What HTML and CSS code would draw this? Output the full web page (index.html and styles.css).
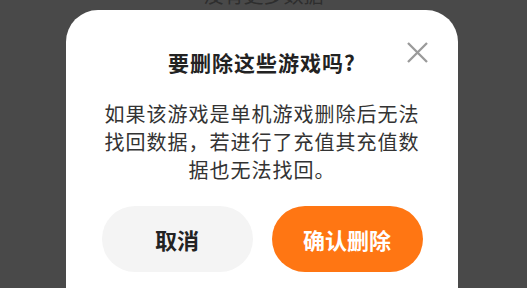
FILE: index.html
```html
<!DOCTYPE html>
<html lang="zh-CN">
<head>
<meta charset="utf-8">
<title>删除游戏</title>
<link rel="stylesheet" href="styles.css">
</head>
<body>
<div class="page">
  <div class="list-end">没有更多数据</div>
</div>
<div class="overlay">
  <div class="dialog">
    <button class="close" aria-label="关闭">
      <svg width="21" height="21" viewBox="0 0 21 21"><path d="M1 1 L20 20 M20 1 L1 20" stroke="#9a9a9a" stroke-width="2.3" fill="none"/></svg>
    </button>
    <h2 class="title">要删除这些游戏吗?</h2>
    <p class="message">如果该游戏是单机游戏删除后无法找回数据，若进行了充值其充值数据也无法找回。</p>
    <div class="actions">
      <button class="btn btn-cancel">取消</button>
      <button class="btn btn-confirm">确认删除</button>
    </div>
  </div>
</div>
</body>
</html>
```
FILE: styles.css
```css
html, body {
  margin: 0;
  padding: 0;
  height: 100%;
  overflow: hidden;
  background: #f5f5f5;
  font-family: "Noto Sans CJK SC", "Noto Sans", sans-serif;
}
.page {
  display: flex;
  justify-content: center;
}
.list-end {
  margin-top: -17px;
  font-size: 20px;
  line-height: 24px;
  color: #999;
}
.overlay {
  position: fixed;
  inset: 0;
  background: rgba(0, 0, 0, 0.7);
  display: flex;
  justify-content: flex-start;
  align-items: flex-start;
  padding: 10px 0 0 66px;
}
.dialog {
  position: relative;
  width: 392px;
  height: 320px;
  background: #fff;
  border-radius: 32px;
  padding: 37px 36px 0;
  box-sizing: border-box;
  display: flex;
  flex-direction: column;
  align-items: center;
}
.close {
  position: absolute;
  top: 32px;
  right: 30px;
  width: 21px;
  height: 21px;
  padding: 0;
  border: 0;
  background: none;
  display: block;
}
.close svg { display: block; }
.title {
  margin: 0;
  font-size: 21px;
  line-height: 30px;
  font-weight: 700;
  letter-spacing: 1px;
  color: #222;
  text-align: center;
}
.message {
  margin: 23px 0 0;
  width: 320px;
  font-size: 20px;
  line-height: 28px;
  letter-spacing: 1px;
  color: #333;
  text-align: center;
}
.actions {
  margin-top: 22px;
  display: flex;
  gap: 19px;
}
.btn {
  width: 151px;
  height: 66px;
  border: 0;
  border-radius: 33px;
  font-family: inherit;
  font-size: 22px;
  font-weight: 700;
  padding: 0;
}
.btn-cancel {
  background: #f4f4f4;
  color: #222;
}
.btn-confirm {
  background: #ff7613;
  color: #fff;
}
```
